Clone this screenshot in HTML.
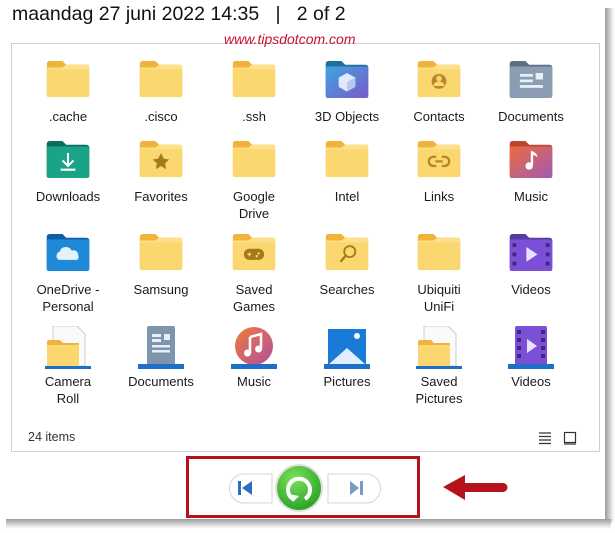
<!DOCTYPE html>
<html><head><meta charset="utf-8"><style>
*{margin:0;padding:0;box-sizing:border-box}
body{width:615px;height:533px;background:#fff;position:relative;overflow:hidden;font-family:"Liberation Sans",sans-serif}
.shr{position:absolute;left:605px;top:8px;width:10px;height:515px;background:linear-gradient(90deg,#9a9a9a,#e8e8e8 70%,#fff)}
.shb{position:absolute;left:6px;top:519px;width:605px;height:10px;background:linear-gradient(180deg,#9a9a9a,#e8e8e8 70%,#fff)}
.title{position:absolute;left:12px;top:3px;font-size:19.5px;color:#111;white-space:pre}
.url{position:absolute;left:224px;top:31px;font-size:14px;font-style:italic;color:#c8102e;z-index:2}
.panel{position:absolute;left:11px;top:43px;width:589px;height:409px;border:1px solid #cfcfcf;background:#fff}
.c{position:absolute;width:92px;text-align:center;font-size:13px;line-height:17px;color:#1a1a1a}
.c svg{display:block;margin:0 auto 10px}
.items{position:absolute;left:28px;top:430px;font-size:12.5px;color:#333}
</style></head><body>
<div class="shr"></div><div class="shb"></div>
<div class="title">maandag 27 juni 2022 14:35   |   2 of 2</div>
<div class="panel"></div>
<div class="url">www.tipsdotcom.com</div>
<svg width="0" height="0" style="position:absolute"><defs>
<symbol id="f" viewBox="0 0 46 40"><path d="M0 3a3 3 0 0 1 3-3h14l4 4h22a3 3 0 0 1 3 3v30H0z" fill="#f0b43a"/><path d="M0 9a2 2 0 0 1 2-2h15l4-3h23a2 2 0 0 1 2 2v31a2 2 0 0 1-2 2H2a2 2 0 0 1-2-2z" fill="#fbd86f"/><path d="M0 7h17l4-3H44a2 2 0 0 1 2 2v3H0z" fill="#fce08a"/></symbol>
</defs></svg>

<!-- row 1 -->
<div class="c" style="left:22px;top:61px"><svg width="46" height="37" viewBox="0 0 46 40"><use href="#f"/></svg>.cache</div>
<div class="c" style="left:115px;top:61px"><svg width="46" height="37" viewBox="0 0 46 40"><use href="#f"/></svg>.cisco</div>
<div class="c" style="left:208px;top:61px"><svg width="46" height="37" viewBox="0 0 46 40"><use href="#f"/></svg>.ssh</div>
<div class="c" style="left:301px;top:61px"><svg width="46" height="37" viewBox="0 0 46 40"><path d="M0 3a3 3 0 0 1 3-3h14l4 4h22a3 3 0 0 1 3 3v30H0z" fill="#1f6e9e"/><defs><linearGradient id="g3" x1="0" y1="0" x2="1" y2="1"><stop offset="0" stop-color="#3fa4e0"/><stop offset="1" stop-color="#7a5bc8"/></linearGradient></defs><rect y="6" width="46" height="34" rx="2" fill="url(#g3)"/><path d="M23 13l9 5v10l-9 5-9-5V18z" fill="#dfe9ff"/><path d="M23 23l9-5v10l-9 5z" fill="#b9c8f2"/></svg>3D Objects</div>
<div class="c" style="left:393px;top:61px"><svg width="46" height="37" viewBox="0 0 46 40"><use href="#f"/><circle cx="23" cy="22" r="8" fill="#b8862a"/><circle cx="23" cy="19" r="3" fill="#fbd86f"/><path d="M17 27a6 5 0 0 1 12 0z" fill="#fbd86f"/></svg>Contacts</div>
<div class="c" style="left:485px;top:61px"><svg width="46" height="37" viewBox="0 0 46 40"><path d="M0 3a3 3 0 0 1 3-3h14l4 4h22a3 3 0 0 1 3 3v30H0z" fill="#5b6f84"/><rect y="6" width="46" height="34" rx="2" fill="#8a9db3"/><g fill="#e8eef5"><rect x="11" y="14" width="14" height="3"/><rect x="28" y="13" width="8" height="7"/><rect x="11" y="20" width="14" height="3"/><rect x="11" y="26" width="25" height="3"/></g></svg>Documents</div>
<!-- row 2 -->
<div class="c" style="left:22px;top:141px"><svg width="46" height="37" viewBox="0 0 46 40"><path d="M0 3a3 3 0 0 1 3-3h14l4 4h22a3 3 0 0 1 3 3v30H0z" fill="#0f6e5a"/><rect y="6" width="46" height="34" rx="2" fill="#1ba387"/><path d="M23 13v14M17 21l6 6 6-6M15 31h16" stroke="#fff" stroke-width="2.2" fill="none"/></svg>Downloads</div>
<div class="c" style="left:115px;top:141px"><svg width="46" height="37" viewBox="0 0 46 40"><use href="#f"/><path d="M23 13l3 6 6 1-4.5 4 1 6.5L23 27l-5.5 3.5 1-6.5L14 20l6-1z" fill="#a6791c"/></svg>Favorites</div>
<div class="c" style="left:208px;top:141px"><svg width="46" height="37" viewBox="0 0 46 40"><use href="#f"/></svg>Google<br>Drive</div>
<div class="c" style="left:301px;top:141px"><svg width="46" height="37" viewBox="0 0 46 40"><use href="#f"/></svg>Intel</div>
<div class="c" style="left:393px;top:141px"><svg width="46" height="37" viewBox="0 0 46 40"><use href="#f"/><path d="M20 17h-3a5 5 0 0 0 0 10h3M26 17h3a5 5 0 0 1 0 10h-3M19 22h8" stroke="#b8862a" stroke-width="2.5" fill="none"/></svg>Links</div>
<div class="c" style="left:485px;top:141px"><svg width="46" height="37" viewBox="0 0 46 40"><path d="M0 3a3 3 0 0 1 3-3h14l4 4h22a3 3 0 0 1 3 3v30H0z" fill="#b9482a"/><defs><linearGradient id="gm" x1="0" y1="0" x2="1" y2="1"><stop offset="0" stop-color="#ee6a3c"/><stop offset="1" stop-color="#a05ab8"/></linearGradient></defs><rect y="6" width="46" height="34" rx="2" fill="url(#gm)"/><path d="M24 11v15" stroke="#fff" stroke-width="2.5"/><circle cx="21" cy="27" r="4" fill="#fff"/><path d="M24 11q6 2 6 7-2-3-6-3z" fill="#fff"/></svg>Music</div>
<!-- row 3 -->
<div class="c" style="left:22px;top:234px"><svg width="46" height="37" viewBox="0 0 46 40"><path d="M0 3a3 3 0 0 1 3-3h14l4 4h22a3 3 0 0 1 3 3v30H0z" fill="#0f5ea8"/><rect y="6" width="46" height="34" rx="2" fill="#1e8ad8"/><path d="M13 28a5 5 0 0 1 1-9 7 7 0 0 1 13-1 5 5 0 0 1 7 5 4 4 0 0 1-1 5z" fill="#e6f2fb"/></svg>OneDrive -<br>Personal</div>
<div class="c" style="left:115px;top:234px"><svg width="46" height="37" viewBox="0 0 46 40"><use href="#f"/></svg>Samsung</div>
<div class="c" style="left:208px;top:234px"><svg width="46" height="37" viewBox="0 0 46 40"><use href="#f"/><rect x="12" y="16" width="22" height="12" rx="6" fill="#a6791c"/><circle cx="28" cy="21" r="1.3" fill="#fbd86f"/><circle cx="26" cy="24" r="1.3" fill="#fbd86f"/><path d="M16 22h4M18 20v4" stroke="#fbd86f" stroke-width="1.3"/></svg>Saved<br>Games</div>
<div class="c" style="left:301px;top:234px"><svg width="46" height="37" viewBox="0 0 46 40"><use href="#f"/><circle cx="26" cy="19" r="6" stroke="#a6791c" stroke-width="2" fill="none"/><path d="M22 23l-6 7" stroke="#a6791c" stroke-width="2.5"/></svg>Searches</div>
<div class="c" style="left:393px;top:234px"><svg width="46" height="37" viewBox="0 0 46 40"><use href="#f"/></svg>Ubiquiti<br>UniFi</div>
<div class="c" style="left:485px;top:234px"><svg width="46" height="37" viewBox="0 0 46 40"><path d="M0 3a3 3 0 0 1 3-3h14l4 4h22a3 3 0 0 1 3 3v30H0z" fill="#5a3aa0"/><rect y="6" width="46" height="34" rx="2" fill="#7b4fd6"/><g fill="#3b2680"><rect x="3" y="10" width="4" height="4"/><rect x="3" y="20" width="4" height="4"/><rect x="3" y="30" width="4" height="4"/><rect x="39" y="10" width="4" height="4"/><rect x="39" y="20" width="4" height="4"/><rect x="39" y="30" width="4" height="4"/></g><path d="M18 14l12 8-12 8z" fill="#e9e2ff"/></svg>Videos</div>
<!-- row 4 -->
<div class="c" style="left:22px;top:326px"><svg width="46" height="43" viewBox="0 0 46 43" style="margin-bottom:4px"><path d="M8 0h24l8 8v32H8z" fill="#fafafa" stroke="#ccc"/><path d="M2 16a2 2 0 0 1 2-2h11l3 3h16v23H2z" fill="#f0b43a"/><rect x="2" y="19" width="32" height="21" fill="#fbd86f"/><rect x="0" y="40" width="46" height="3" fill="#1e6fc8"/></svg>Camera<br>Roll</div>
<div class="c" style="left:115px;top:326px"><svg width="46" height="43" viewBox="0 0 46 43" style="margin-bottom:4px"><rect x="9" y="0" width="28" height="40" rx="2" fill="#7f95ad"/><g fill="#e8eef5"><rect x="14" y="8" width="9" height="3"/><rect x="26" y="8" width="6" height="6"/><rect x="14" y="13" width="9" height="3"/><rect x="14" y="19" width="18" height="2.5"/><rect x="14" y="24" width="18" height="2.5"/></g><rect x="0" y="38" width="46" height="5" fill="#1e6fc8"/></svg>Documents</div>
<div class="c" style="left:208px;top:326px"><svg width="46" height="43" viewBox="0 0 46 43" style="margin-bottom:4px"><defs><linearGradient id="gm2" x1="0" y1="0" x2="1" y2="1"><stop offset="0" stop-color="#f07a3c"/><stop offset="1" stop-color="#b0509c"/></linearGradient></defs><circle cx="23" cy="20" r="19" fill="url(#gm2)"/><path d="M19 11l11-3v15M19 11v16" stroke="#fff" stroke-width="2.5" fill="none"/><circle cx="16.5" cy="27" r="3.5" fill="#fff"/><circle cx="27.5" cy="23" r="3.5" fill="#fff"/><rect x="0" y="38" width="46" height="5" fill="#1e6fc8"/></svg>Music</div>
<div class="c" style="left:301px;top:326px"><svg width="46" height="43" viewBox="0 0 46 43" style="margin-bottom:4px"><rect x="4" y="3" width="38" height="36" fill="#1a7ad8"/><path d="M4 39l19-17 19 17z" fill="#dfefff"/><circle cx="33" cy="10" r="3" fill="#fff"/><rect x="0" y="38" width="46" height="5" fill="#1e6fc8"/></svg>Pictures</div>
<div class="c" style="left:393px;top:326px"><svg width="46" height="43" viewBox="0 0 46 43" style="margin-bottom:4px"><path d="M8 0h24l8 8v32H8z" fill="#fafafa" stroke="#ccc"/><path d="M2 16a2 2 0 0 1 2-2h11l3 3h16v23H2z" fill="#f0b43a"/><rect x="2" y="19" width="32" height="21" fill="#fbd86f"/><rect x="0" y="40" width="46" height="3" fill="#1e6fc8"/></svg>Saved<br>Pictures</div>
<div class="c" style="left:485px;top:326px"><svg width="46" height="43" viewBox="0 0 46 43" style="margin-bottom:4px"><rect x="7" y="0" width="32" height="40" rx="2" fill="#7b4fd6"/><g fill="#3b2680"><rect x="9" y="4" width="4" height="4"/><rect x="9" y="12" width="4" height="4"/><rect x="9" y="20" width="4" height="4"/><rect x="9" y="28" width="4" height="4"/><rect x="33" y="4" width="4" height="4"/><rect x="33" y="12" width="4" height="4"/><rect x="33" y="20" width="4" height="4"/><rect x="33" y="28" width="4" height="4"/></g><path d="M19 13l10 7-10 7z" fill="#e9e2ff"/><rect x="0" y="38" width="46" height="5" fill="#1e6fc8"/></svg>Videos</div>

<div class="items">24 items</div>
<svg style="position:absolute;left:538px;top:431px" width="40" height="14"><g stroke="#333" stroke-width="1.2"><path d="M1 2h12M1 5.5h12M1 9h12M1 12.5h12"/><rect x="26.5" y="1.5" width="11" height="10" fill="none"/><path d="M26 13h12"/></g></svg>

<div style="position:absolute;left:186px;top:456px;width:234px;height:62px;border:3px solid #b5121b"></div>
<svg style="position:absolute;left:210px;top:460px" width="180" height="56">
<path d="M34 14h28v29H34a14.5 14.5 0 0 1 0-29z" fill="#fff" stroke="#d4d4d4"/>
<path d="M118 14h38a14.5 14.5 0 0 1 0 29h-38z" fill="#fff" stroke="#d4d4d4"/>
<rect x="28" y="21" width="3" height="14" fill="#2a6fc0"/><path d="M42 21v14l-10-7z" fill="#2a6fc0"/>
<path d="M140 21v14l9-7z" fill="#7a9ac4"/><rect x="150" y="21" width="3" height="14" fill="#7a9ac4"/>
<defs><radialGradient id="gg" cx="0.4" cy="0.3" r="0.8"><stop offset="0" stop-color="#7de05a"/><stop offset="1" stop-color="#1e9a1e"/></radialGradient></defs>
<circle cx="89" cy="28" r="23" fill="url(#gg)" stroke="#e0e0e0" stroke-width="2"/>
<path d="M83 39a11 11 0 1 1 12 0" stroke="#fff" stroke-width="4" fill="none"/><path d="M78 34l5 8 6-6z" fill="#fff"/>
</svg>
<svg style="position:absolute;left:440px;top:472px" width="72" height="32"><path d="M3 15l22-12v8h38a4 4 0 0 1 0 9H25v8z" fill="#b5121b"/></svg>
</body></html>
